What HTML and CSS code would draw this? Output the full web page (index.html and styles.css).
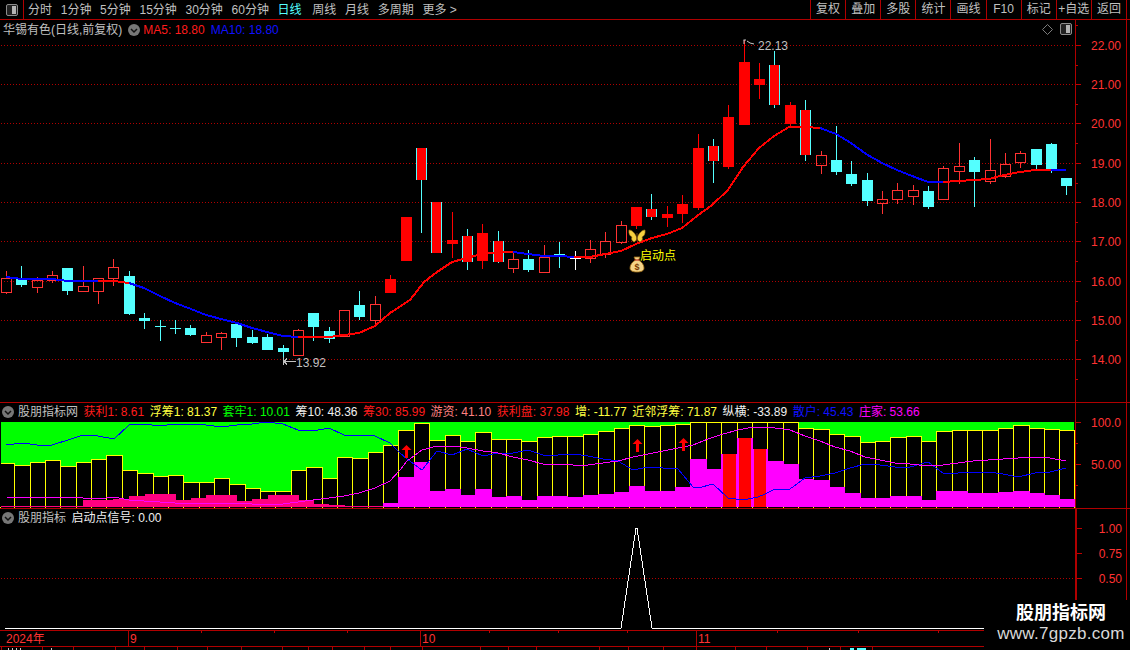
FILE: index.html
```html
<!DOCTYPE html>
<html lang="zh">
<head>
<meta charset="utf-8">
<title>华锡有色</title>
<link rel="stylesheet" href="styles.css">
</head>
<body>
<div class="app">
  <header class="toolbar">
    <div class="side-btn">
      <svg class="split-icon" viewBox="0 0 12 12"><rect x="0.5" y="0.5" width="11" height="11" rx="1.5"/><rect class="split-fill" x="6" y="2" width="4" height="8"/></svg>
    </div>
    <nav class="periods">
      <span>分时</span><span>1分钟</span><span>5分钟</span><span>15分钟</span><span>30分钟</span><span>60分钟</span>
      <span class="active">日线</span><span>周线</span><span>月线</span><span>多周期</span><span>更多 &gt;</span>
    </nav>
    <div class="actions">
      <span>复权</span><span>叠加</span><span>多股</span><span>统计</span><span>画线</span><span>F10</span><span>标记</span><span>+自选</span><span>返回</span>
    </div>
  </header>

  <section class="panel panel-main">
    <div class="plot">
      <svg id="price" class="chart" width="1075" height="382" viewBox="0 20 1075 382"></svg>
      <div class="legend legend-main">
        <span class="stock">华锡有色(日线,前复权)</span>
        <svg class="drop" viewBox="0 0 12 12"><circle cx="6" cy="6" r="6"/><path d="M3 5l3 3 3-3"/></svg>
        <span class="red">MA5: 18.80</span>
        <span class="blue">MA10: 18.80</span>
      </div>
      <div class="tools">
        <svg class="diamond" viewBox="0 0 11 11"><path d="M5.5 0.5l5 5-5 5-5-5z"/></svg>
        <svg class="split-icon" viewBox="0 0 12 12"><rect x="0.5" y="0.5" width="11" height="11" rx="1.5"/><rect class="split-fill" x="6" y="2" width="4" height="8"/></svg>
      </div>
    </div>
    <div class="axis"><svg id="price-axis" class="chart" width="50" height="382" viewBox="1076 20 50 382"></svg></div>
  </section>

  <section class="panel panel-ind">
    <div class="plot">
      <div class="legend legend-ind">
        <svg class="drop" viewBox="0 0 12 12"><circle cx="6" cy="6" r="6"/><path d="M3 5l3 3 3-3"/></svg>
        <span class="name">股朋指标网</span>
        <span class="red">获利1: 8.61</span>
        <span class="yellow">浮筹1: 81.37</span>
        <span class="green">套牢1: 10.01</span>
        <span class="white">筹10: 48.36</span>
        <span class="red">筹30: 85.99</span>
        <span class="salmon">游资: 41.10</span>
        <span class="red">获利盘: 37.98</span>
        <span class="yellow">增: -11.77</span>
        <span class="yellow">近邻浮筹: 71.87</span>
        <span class="white">纵横: -33.89</span>
        <span class="blue">散户: 45.43</span>
        <span class="magenta">庄家: 53.66</span>
      </div>
      <svg id="chips" class="chart" width="1075" height="105" viewBox="0 403 1075 105"></svg>
    </div>
    <div class="axis"><svg id="chips-axis" class="chart" width="50" height="105" viewBox="1076 403 50 105"></svg></div>
  </section>

  <section class="panel panel-sig">
    <div class="plot">
      <div class="legend legend-ind">
        <svg class="drop" viewBox="0 0 12 12"><circle cx="6" cy="6" r="6"/><path d="M3 5l3 3 3-3"/></svg>
        <span class="name">股朋指标</span>
        <span class="white">启动点信号: 0.00</span>
      </div>
      <svg id="signal" class="chart" width="1075" height="121" viewBox="0 509 1075 121"></svg>
    </div>
    <div class="axis"><svg id="signal-axis" class="chart" width="50" height="121" viewBox="1076 509 50 121"></svg></div>
  </section>

  <div class="dates"><svg id="dates" class="chart" width="1130" height="15" viewBox="0 631 1130 15"></svg></div>
  <div class="tabs"><svg id="tabs" class="chart" width="1130" height="3" viewBox="0 647 1130 3"></svg></div>

  <aside class="brand">
    <div class="brand-name">股朋指标网</div>
    <div class="brand-url">www.7gpzb.com</div>
  </aside>
</div>
<script src="charts.js"></script>
</body>
</html>
```

FILE: styles.css
```css
* { box-sizing: border-box; }
html, body { margin: 0; padding: 0; background: #000; }
body {
  width: 1130px;
  height: 650px;
  overflow: hidden;
  font-family: "Liberation Sans", "Noto Sans CJK SC", sans-serif;
  font-size: 12px;
  line-height: 16px;
  color: #c0c0c0;
}
.app { position: relative; width: 1130px; height: 650px; display: flex; flex-direction: column; background: #000; }

.toolbar { height: 20px; display: flex; border-bottom: 1px solid #b00000; flex: none; }
.side-btn { width: 24px; border-right: 1px solid #b00000; display: flex; align-items: center; justify-content: center; }
.split-icon { width: 12px; height: 12px; }
.split-icon rect { fill: #222; stroke: #8c8c8c; }
.split-icon .split-fill { fill: #b4b4b4; stroke: none; }
.periods { display: flex; gap: 8.7px; padding-left: 4px; align-items: center; white-space: nowrap; }
.active { color: #54ffff; margin-right: 2px; }
.actions { margin-left: auto; margin-right: 3px; width: 317px; display: flex; }
.actions span { flex: 1; text-align: center; border-left: 1px solid #b00000; line-height: 19px; white-space: nowrap; }
.actions span:last-child { border-right: 1px solid #b00000; }

.panel { display: flex; flex: none; }
.panel-main { height: 382px; }
.panel-ind { height: 106px; border-top: 1px solid #b00000; }
.panel-sig { height: 122px; border-top: 1px solid #b00000; }
.plot { position: relative; width: 1075px; flex: none; }
.axis { width: 52px; flex: none; border-left: 1px solid #b00000; border-right: 1px solid #b00000; }
.panel-sig .axis { border-left-width: 2px; }
.chart { display: block; }

.legend { position: absolute; left: 0; display: flex; align-items: center; white-space: nowrap; }
.legend-main { top: 1px; left: 3px; height: 18px; gap: 6px; }
.legend-main .drop { margin-right: -3px; }
.legend-ind { top: 0; left: 2px; height: 17px; gap: 5.5px; }
.legend-ind .name { margin-left: -1.5px; color: #c0c0c0; }
.drop { width: 12px; height: 12px; flex: none; }
.drop circle { fill: #777; }
.drop path { fill: none; stroke: #111; stroke-width: 1.5; }
.red { color: #ff1c1c; }
.blue { color: #1010ff; }
.yellow { color: #ffff40; }
.green { color: #00ff00; }
.white { color: #f0f0f0; }
.salmon { color: #ff8080; }
.magenta { color: #ff00ff; }

.tools { position: absolute; top: 3px; right: 3px; display: flex; gap: 7px; align-items: center; }
.diamond { width: 11px; height: 11px; }
.diamond path { fill: none; stroke: #7c7c7c; }

.dates { height: 17px; flex: none; border-top: 1px solid #b00000; border-bottom: 1px solid #b00000; }
.tabs { height: 3px; flex: none; }

.axis-text { fill: #ff3232; font-size: 12px; text-anchor: end; }
.date-text { fill: #ff3232; font-size: 12px; }
.note { fill: #c0c0c0; font-size: 12px; }
.signal-note { fill: #ffff00; font-size: 12px; }
.bag-text { fill: #7a3a00; font-size: 9px; font-weight: bold; text-anchor: middle; }

.brand { position: absolute; left: 984px; top: 600px; width: 146px; height: 50px; padding-left: 8px; background: #000; text-align: center; color: #fff; }
.brand-name { font-size: 18px; line-height: 22px; margin-top: 2px; font-weight: bold; }
.brand-url { font-size: 17px; line-height: 20px; letter-spacing: 0.3px; color: #d8d8d8; }
```

FILE: charts.js
```js
(function () {
  var NS = 'http://www.w3.org/2000/svg';
  var RED = '#ff3232', SOLID = '#ff0000', CYAN = '#54ffff', GRID = '#b00000', TICK = '#c00000';

  function el(parent, tag, attrs, text) {
    var n = document.createElementNS(NS, tag);
    for (var k in attrs) n.setAttribute(k, attrs[k]);
    if (text !== undefined) n.textContent = text;
    parent.appendChild(n);
    return n;
  }
  function rect(p, x, y, w, h, fill) {
    return el(p, 'rect', { x: x, y: y, width: w, height: h, fill: fill, 'shape-rendering': 'crispEdges' });
  }
  function line(p, x1, y1, x2, y2, c, extra) {
    var a = { x1: x1, y1: y1, x2: x2, y2: y2, stroke: c, 'stroke-width': 1, 'shape-rendering': 'crispEdges' };
    for (var k in extra) a[k] = extra[k];
    return el(p, 'line', a);
  }
  function grid(p, y, x2) {
    line(p, 1, y + 0.5, x2, y + 0.5, GRID, { 'stroke-dasharray': '1 2' });
  }
  function poly(p, pts, c, w) {
    el(p, 'polyline', { points: pts.map(function (q) { return q.join(','); }).join(' '), fill: 'none', stroke: c, 'stroke-width': w, 'stroke-linejoin': 'round', 'shape-rendering': 'crispEdges' });
  }
  function cx(i) { return Math.floor(6.4 + 15.37 * i); }

  /* ---------- price panel ---------- */
  var price = document.getElementById('price');
  [45, 84, 123, 163, 202, 241, 281, 320, 359].forEach(function (y) { grid(price, y, 1075); });

  // type, wick top, body top, body bottom, wick bottom
  var candles = [
    ['h',271,278,292,294],['C',266,279,285,287],['h',277,280,287,293],['h',271,275,280,283],['C',268,268,291,295],
    ['h',266,286,291,291],['h',278,278,291,304],['h',259,267,278,286],['C',271,276,314,315],['C',313,318,321,329],
    ['X',320,326,326,341],['X',320,328,328,334],['C',325,328,335,336],['h',332,335,342,343],['h',332,333,337,350],
    ['C',324,324,338,347],['C',330,337,343,344],['C',334,337,350,350],['C',345,348,352,362],['h',329,330,355,355],
    ['C',313,313,327,341],['C',327,331,339,343],['h',310,310,336,337],['C',291,305,317,320],['h',296,304,320,326],
    ['R',275,279,293,293],['R',217,217,261,261],['M',148,148,180,233],['M',202,202,253,253],['R',212,240,244,258],
    ['M',229,236,262,270],['R',224,233,261,269],['M',231,241,262,263],['h',253,259,268,273],['C',250,259,270,272],
    ['h',245,257,272,273],['X',242,254,254,268],['W',251,258,258,270],['h',240,249,258,263],['h',232,241,254,258],
    ['h',221,225,242,244],['R',207,207,226,229],['M',194,209,217,220],['R',206,214,218,227],['R',195,204,214,223],
    ['R',134,148,208,210],['M',139,146,161,183],['R',105,117,167,169],['R',40,62,125,125],['R',63,79,85,99],
    ['M',51,65,105,108],['R',102,105,124,127],['M',100,110,155,161],['h',151,155,165,174],['C',126,160,172,175],
    ['C',161,174,184,186],['C',173,180,201,206],['h',191,199,203,214],['h',183,190,199,204],['h',185,190,196,205],
    ['C',186,191,207,209],['h',166,168,199,199],['h',143,166,171,184],['C',157,160,172,207],['h',139,170,181,184],
    ['h',153,164,176,178],['h',151,153,162,168],['C',149,149,165,169],['C',143,144,169,173],['C',178,178,186,195]
  ];
  candles.forEach(function (c, i) {
    var x = cx(i), t = c[0], w = x + 0.5;
    var wickColor = { h: RED, R: SOLID, C: CYAN, M: CYAN, X: CYAN, W: '#ffffff' }[t];
    if (c[1] < c[2]) line(price, w, c[1], w, c[2], wickColor);
    if (c[4] > c[3]) line(price, w, c[3], w, c[4], wickColor);
    if (t === 'h') {
      el(price, 'rect', { x: x - 4.5, y: c[2] + 0.5, width: 10, height: c[3] - c[2], fill: 'none', stroke: RED, 'shape-rendering': 'crispEdges' });
    } else if (t === 'R') {
      rect(price, x - 5, c[2], 11, c[3] - c[2], SOLID);
    } else if (t === 'C') {
      rect(price, x - 5, c[2], 11, c[3] - c[2], CYAN);
    } else if (t === 'M') {
      rect(price, x - 5, c[2], 11, c[3] - c[2], SOLID);
      rect(price, x - 5, c[2], 1, c[3] - c[2], CYAN);
      rect(price, x + 5, c[2], 1, c[3] - c[2], CYAN);
    } else {
      rect(price, x - 5, c[2], 11, 1, wickColor);
    }
  });

  var ma = [[6,277],[22,279],[37,279],[52,279],[68,281],[83,281],[98,281],[114,281],[129,283],[144,288],[160,296],[175,303],[191,309],[206,315],[221,319],[237,323],[252,328],[267,332],[283,336],[298,337],[313,337],[329,337],[344,335],[359,333],[375,326],[390,313],[410,300],[424,282],[437,272],[452,262],[467,258],[482,254],[498,252],[513,252],[528,254],[544,256],[559,256],[574,257],[590,257],[605,254],[621,251],[636,244],[652,238],[667,234],[682,228],[697,216],[712,205],[728,190],[743,167],[759,148],[774,136],[789,127],[805,127],[820,128],[836,134],[851,143],[866,154],[882,163],[897,170],[912,176],[928,182],[943,182],[958,181],[974,180],[989,179],[1004,175],[1020,172],[1035,170],[1051,170],[1066,170]];
  var ranges = [[6,98,'#0000ff'],[98,129,'#ff0000'],[129,298,'#0000ff'],[298,513,'#ff0000'],[513,574,'#0000ff'],[574,820,'#ff0000'],[820,943,'#0000ff'],[943,1051,'#ff0000'],[1051,1066,'#0000ff']];
  ranges.forEach(function (r) {
    poly(price, ma.filter(function (q) { return q[0] >= r[0] && q[0] <= r[1]; }), r[2], 2);
  });

  // extreme markers
  el(price, 'path', { d: 'M743.5 40H746M744 40v4M747 41l3 2 4 1', fill: 'none', stroke: '#c8c8c8' });
  el(price, 'text', { x: 758, y: 50, class: 'note' }, '22.13');
  el(price, 'path', { d: 'M284 361.5H296M284 361.5l3-3M284 361.5l3 3M283.5 357v8', fill: 'none', stroke: '#c0c0c0', 'shape-rendering': 'crispEdges' });
  el(price, 'text', { x: 296, y: 367, class: 'note' }, '13.92');

  // butterfly
  var b = el(price, 'g', { transform: 'translate(637 236)' });
  el(b, 'path', { d: 'M0 2C-2-3-5-6-8-6C-8.500-2-7 0-5 1C-6 3-5 5-3 6C-1 5 0 3 0 2Z', fill: '#f6cf40', stroke: '#a87810', 'stroke-width': 0.6 });
  el(b, 'path', { d: 'M0 2C2-3 5-6 8-6C8.500-2 7 0 5 1C6 3 5 5 3 6C1 5 0 3 0 2Z', fill: '#f6cf40', stroke: '#a87810', 'stroke-width': 0.6 });
  el(b, 'path', { d: 'M0-3V5', stroke: '#5a3a10', 'stroke-width': 1.2 });
  // money bag
  var m = el(price, 'g', { transform: 'translate(637 264)' });
  el(m, 'path', { d: 'M-3-7H3L1.5-4C5-2 7 1 7 4C7 7 4 8 0 8C-4 8-7 7-7 4C-7 1-5-2-1.5-4Z', fill: '#f4d488', stroke: '#a06c14', 'stroke-width': 0.8 });
  el(m, 'rect', { x: -2.5, y: -4.6, width: 5, height: 1.2, fill: '#c03020' });
  el(m, 'text', { x: 0, y: 6, class: 'bag-text' }, '$');
  el(price, 'text', { x: 640, y: 260, class: 'signal-note' }, '启动点');

  /* ---------- axes ---------- */
  function axis(id, ticks) {
    var a = document.getElementById(id);
    ticks.forEach(function (t) {
      var len = t[1] ? 5 : 2;
      line(a, 1076, t[0] + 0.5, 1076 + len, t[0] + 0.5, TICK);
      if (t[1]) el(a, 'text', { x: 1121, y: t[0] + 5, class: 'axis-text' }, t[1]);
    });
  }
  var pt = [], py = [[45,'22.00'],[84,'21.00'],[123,'20.00'],[163,'19.00'],[202,'18.00'],[241,'17.00'],[281,'16.00'],[320,'15.00'],[359,'14.00']];
  py.forEach(function (q, i) {
    pt.push(q);
    if (i < py.length - 1) pt.push([Math.round((q[0] + py[i + 1][0]) / 2)]);
  });
  pt.push([25], [379]);
  axis('price-axis', pt);
  axis('chips-axis', [[422,'100.0'],[443],[464,'50.00'],[485]]);
  axis('signal-axis', [[528,'1.00'],[578,'0.50'],[553,'0.75']]);

  /* ---------- chip distribution panel ---------- */
  var chips = document.getElementById('chips');
  var BOTTOM = 507;
  rect(chips, 1, 422, 1073, BOTTOM - 422, '#00ff00');
  var tops = [463,465,462,460,466,462,459,455,470,473,476,475,482,482,478,484,488,491,491,470,467,478,457,458,452,445,430,423,440,435,441,432,439,439,441,437,436,436,434,431,428,425,426,425,424,422,422,422,422,422,422,422,428,429,434,436,442,441,437,436,441,431,430,430,430,428,425,428,429,430];
  function bound(i) { return i >= tops.length ? 1074 : Math.max(0, Math.round(-1.2 + 15.37 * i)); }
  tops.forEach(function (t, i) {
    var l = bound(i), r = bound(i + 1);
    el(chips, 'rect', { x: l + 0.5, y: t + 0.5, width: r - l, height: BOTTOM - t + 2, fill: '#000', stroke: '#ffff00', 'shape-rendering': 'crispEdges' });
  });
  // early profit blocks span from candle centre to candle centre
  [[83,113,500],[113,129,499],[129,145,496],[145,176,494],[176,191,500],[191,206,498],[206,237,495],[237,252,501],[252,268,499],[268,299,495],[299,314,500],[314,329,504],[329,345,505]].forEach(function (q) {
    rect(chips, q[0], q[2], q[1] - q[0], BOTTOM - q[2], '#ff0080');
  });
  rect(chips, 1, 506, 382, 1, '#ff0080');
  var fills = {25:503,26:477,27:462,28:491,29:489,30:495,31:489,32:497,33:496,34:500,35:496,36:496,37:497,38:495,39:494,40:492,41:486,42:491,43:491,44:487,45:459,46:469,47:454,48:438,49:449,50:461,51:464,52:479,53:480,54:487,55:493,56:498,57:498,58:496,59:496,60:500,61:491,62:491,63:493,64:493,65:492,66:491,67:493,68:495,69:499};
  Object.keys(fills).forEach(function (k) {
    var i = +k, l = bound(i), r = bound(i + 1), t = fills[k];
    rect(chips, l, t, r - l + 1, BOTTOM - t, '#ff00ff');
    if (i >= 47 && i <= 49) rect(chips, l + 2, t, r - l - 3, BOTTOM - t, '#ff0000');
  });
  rect(chips, 0, 422, 1, BOTTOM - 422, '#000');

  function map(list, x0) { return list.map(function (q) { return [Math.round(x0 + q[0] / 3), Math.round(398 + q[1] / 3)]; }); }
  var blue = map([[18,142],[67,136],[112,142],[157,142],[205,126],[250,111],[295,115],[343,124],[388,81],[433,78],[481,85],[526,78],[574,78],[619,81],[664,88],[712,81],[757,78],[802,73],[850,78],[895,97],[940,100],[988,91],[1033,112],[1078,111],[1126,115],[1170,135],[1200,165]], 0)
    .concat(map([[20,183],[65,216],[110,160],[155,170],[200,153],[250,175],[295,166],[340,166],[385,157],[430,170],[475,172],[520,169],[565,174],[610,184],[655,190],[700,216],[745,207],[790,210],[835,214],[880,268],[895,270],[940,259],[985,300],[1030,307],[1075,297]], 400))
    .concat(map([[0,288],[30,274],[75,274],[120,240],[165,235],[210,225],[255,210],[300,198],[345,201],[390,207],[435,207],[490,193],[535,226],[580,226],[625,223],[670,223],[715,228],[760,238],[810,226],[855,223],[903,211]], 765));
  var pink = map([[18,298],[250,301],[295,304],[343,298],[388,307],[433,310],[481,313],[526,316],[712,316],[757,318],[802,320],[850,318],[895,312],[940,305],[988,301],[1033,294],[1078,284],[1126,270],[1170,250],[1200,215]], 0)
    .concat(map([[20,190],[65,155],[110,145],[155,145],[200,151],[250,160],[295,166],[340,178],[385,187],[430,197],[475,199],[520,202],[565,202],[610,196],[655,190],[700,178],[745,167],[790,160],[835,151],[880,140],[925,124],[970,108],[1015,95],[1060,88]], 400))
    .concat(map([[0,88],[30,91],[75,97],[120,115],[165,130],[210,148],[255,160],[300,176],[345,187],[390,195],[435,199],[490,205],[535,201],[580,195],[625,189],[670,187],[715,184],[760,181],[810,178],[855,181],[903,190]], 765));
  poly(chips, blue, '#0000ff', 1);
  poly(chips, pink, '#ff00ff', 1);
  [[406,445],[637,439],[683,438]].forEach(function (q) {
    el(chips, 'path', { d: 'M' + (q[0] + 0.5) + ' ' + q[1] + 'l5 5h-3.5v8h-3v-8h-3.5z', fill: '#ff0000' });
  });

  /* ---------- signal panel ---------- */
  var signal = document.getElementById('signal');
  grid(signal, 578, 1075);
  poly(signal, [[5,628],[621,628],[636,528],[637,528],[652,628],[1075,628]], '#ffffff', 1);

  /* ---------- date axis ---------- */
  var dates = document.getElementById('dates');
  el(dates, 'text', { x: 6, y: 643, class: 'date-text' }, '2024年');
  [[128,'9'],[420,'10'],[696,'11']].forEach(function (q) {
    line(dates, q[0] + 0.5, 631, q[0] + 0.5, 646, GRID);
    el(dates, 'text', { x: q[0] + 2, y: 643, class: 'date-text' }, q[1]);
  });
  [201,274,347,489,558,627,777,858,938].forEach(function (x) {
    line(dates, x + 0.5, 631, x + 0.5, 633, TICK);
  });

  /* ---------- bottom tab strip, cut off by the window edge ---------- */
  var tabs = document.getElementById('tabs');
  [1,42,73,115,144,177,207,241,282,308,332,364,390,422,480,508,536,599,628,663,696,735,766,807,840,872].forEach(function (x) {
    line(tabs, x + 0.5, 647, x + 0.5, 650, GRID);
  });
  [8,12,16,20,51,829].forEach(function (x) { rect(tabs, x, 648, 1, 2, '#c8c8c8'); });
  rect(tabs, 850, 648, 4, 2, CYAN);
  rect(tabs, 857, 648, 9, 2, CYAN);
})();
```
